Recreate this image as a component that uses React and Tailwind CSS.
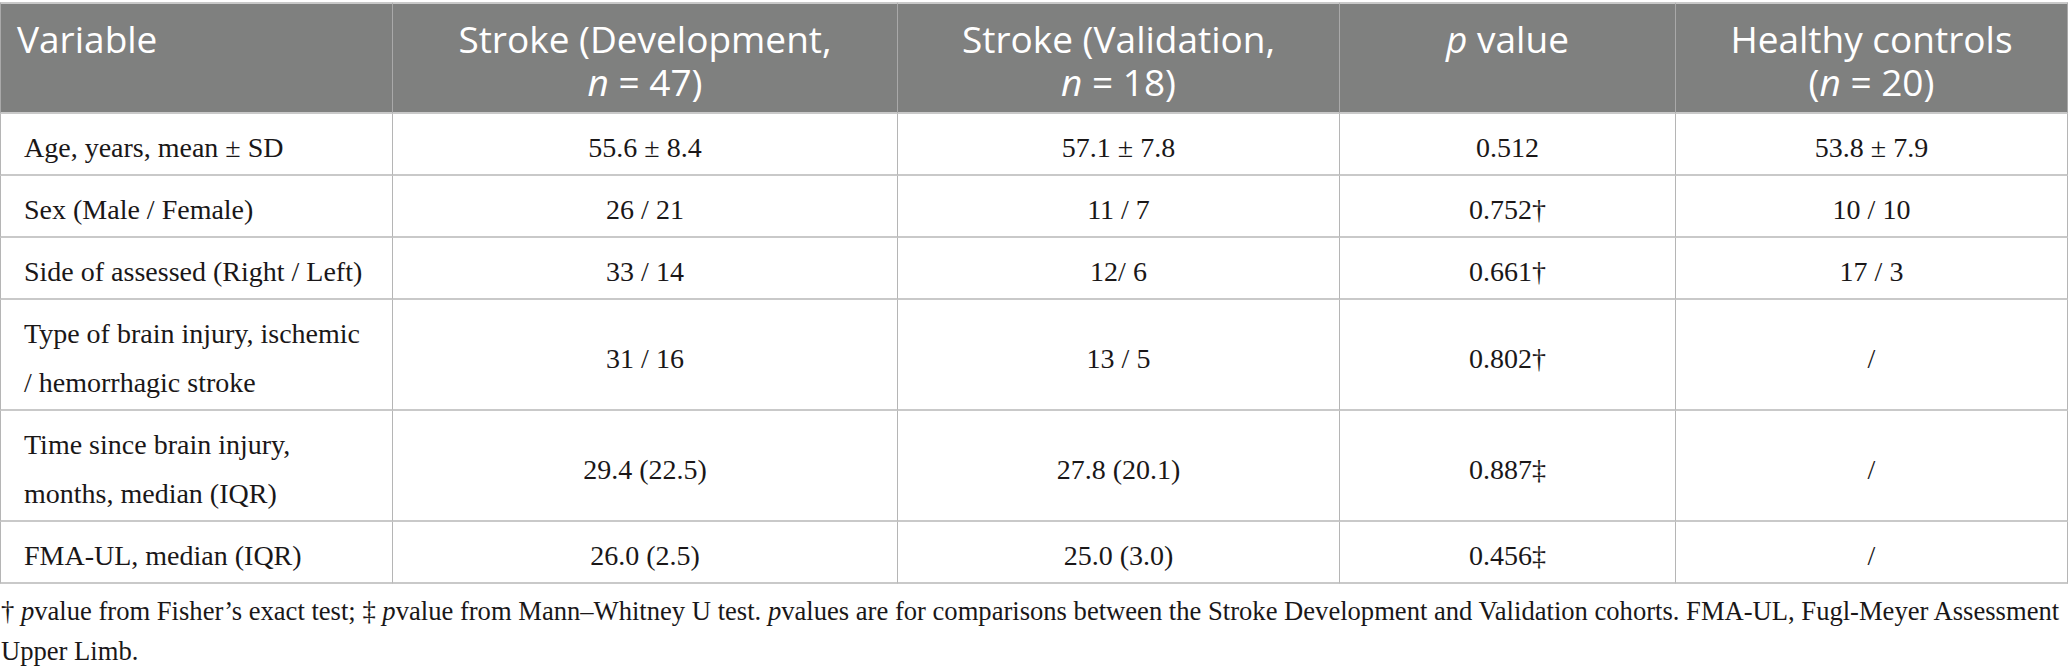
import React from "react";

const rows = [
  { label: ["Age, years, mean ± SD"], dev: "55.6 ± 8.4", val: "57.1 ± 7.8", p: "0.512", hc: "53.8 ± 7.9" },
  { label: ["Sex (Male / Female)"], dev: "26 / 21", val: "11 / 7", p: "0.752†", hc: "10 / 10" },
  { label: ["Side of assessed (Right / Left)"], dev: "33 / 14", val: "12/ 6", p: "0.661†", hc: "17 / 3" },
  { label: ["Type of brain injury, ischemic", "/ hemorrhagic stroke"], dev: "31 / 16", val: "13 / 5", p: "0.802†", hc: "/" },
  { label: ["Time since brain injury,", "months, median (IQR)"], dev: "29.4 (22.5)", val: "27.8 (20.1)", p: "0.887‡", hc: "/" },
  { label: ["FMA-UL, median (IQR)"], dev: "26.0 (2.5)", val: "25.0 (3.0)", p: "0.456‡", hc: "/" },
];

const serif = "font-['Liberation_Serif','Times_New_Roman',serif]";

function HeadLines({ lines }) {
  return (
    <div className="flex flex-col">
      {lines.map((l, i) => (
        <div key={i} className="h-[43px] leading-[43px]">
          {l}
        </div>
      ))}
    </div>
  );
}

export default function App() {
  const th =
    "bg-[#7f807f] text-white font-['Open_Sans','Noto_Sans',sans-serif] text-[37px] leading-[43px] font-normal align-top pt-[13px] pb-[9px] border-t-2 border-b-2 border-t-[#c9c9c9] border-b-[#c9c9c9] whitespace-nowrap";
  const td =
    "text-[28px] leading-[49px] text-[#1a1718] pt-[9px] pb-[2px] border-b-2 border-b-[#c9c9c9] whitespace-nowrap align-middle";
  return (
    <div className="w-[2068px] h-[672px] bg-white pt-[2px] overflow-hidden">
      <table className={`table-fixed w-[2068px] border-separate border-spacing-0 ${serif}`}>
        <colgroup>
          <col className="w-[392px]" />
          <col className="w-[505px]" />
          <col className="w-[442px]" />
          <col className="w-[336px]" />
          <col className="w-[393px]" />
        </colgroup>
        <thead>
          <tr>
            <th className={`${th} text-left pl-[16px] border-l border-l-[#a9a9a9]`}>
              <HeadLines lines={["Variable"]} />
            </th>
            <th className={`${th} text-center border-l border-l-[#a9a9a9]`}>
              <HeadLines lines={["Stroke (Development,", <><i>n</i> = 47)</>]} />
            </th>
            <th className={`${th} text-center border-l border-l-[#a9a9a9]`}>
              <HeadLines lines={["Stroke (Validation,", <><i>n</i> = 18)</>]} />
            </th>
            <th className={`${th} text-center border-l border-l-[#a9a9a9]`}>
              <HeadLines lines={[<><i>p</i> value</>]} />
            </th>
            <th className={`${th} text-center border-l border-r border-l-[#a9a9a9] border-r-[#a9a9a9]`}>
              <HeadLines lines={["Healthy controls", <>(<i>n</i> = 20)</>]} />
            </th>
          </tr>
        </thead>
        <tbody>
          {rows.map((r, i) => (
            <tr key={i}>
              <td className={`${td} text-left pl-[23px] border-l border-l-[#b5b5b5]`}>
                {r.label.map((l, j) => (
                  <React.Fragment key={j}>
                    {j > 0 && <br />}
                    {l}
                  </React.Fragment>
                ))}
              </td>
              <td className={`${td} text-center border-l border-l-[#b5b5b5]`}>{r.dev}</td>
              <td className={`${td} text-center border-l border-l-[#b5b5b5]`}>{r.val}</td>
              <td className={`${td} text-center border-l border-l-[#b5b5b5]`}>{r.p}</td>
              <td className={`${td} text-center border-l border-r border-l-[#b5b5b5] border-r-[#b5b5b5]`}>{r.hc}</td>
            </tr>
          ))}
        </tbody>
      </table>
      <p className={`${serif} text-[26.6px] leading-[40px] text-[#1a1718] mt-[7px] pl-[1px] whitespace-nowrap`}>
        † <i>p</i>value from Fisher’s exact test; ‡ <i>p</i>value from Mann–Whitney U test. <i>p</i>values are for
        comparisons between the Stroke Development and Validation cohorts. FMA-UL, Fugl-Meyer Assessment
        <br />
        Upper Limb.
      </p>
    </div>
  );
}
